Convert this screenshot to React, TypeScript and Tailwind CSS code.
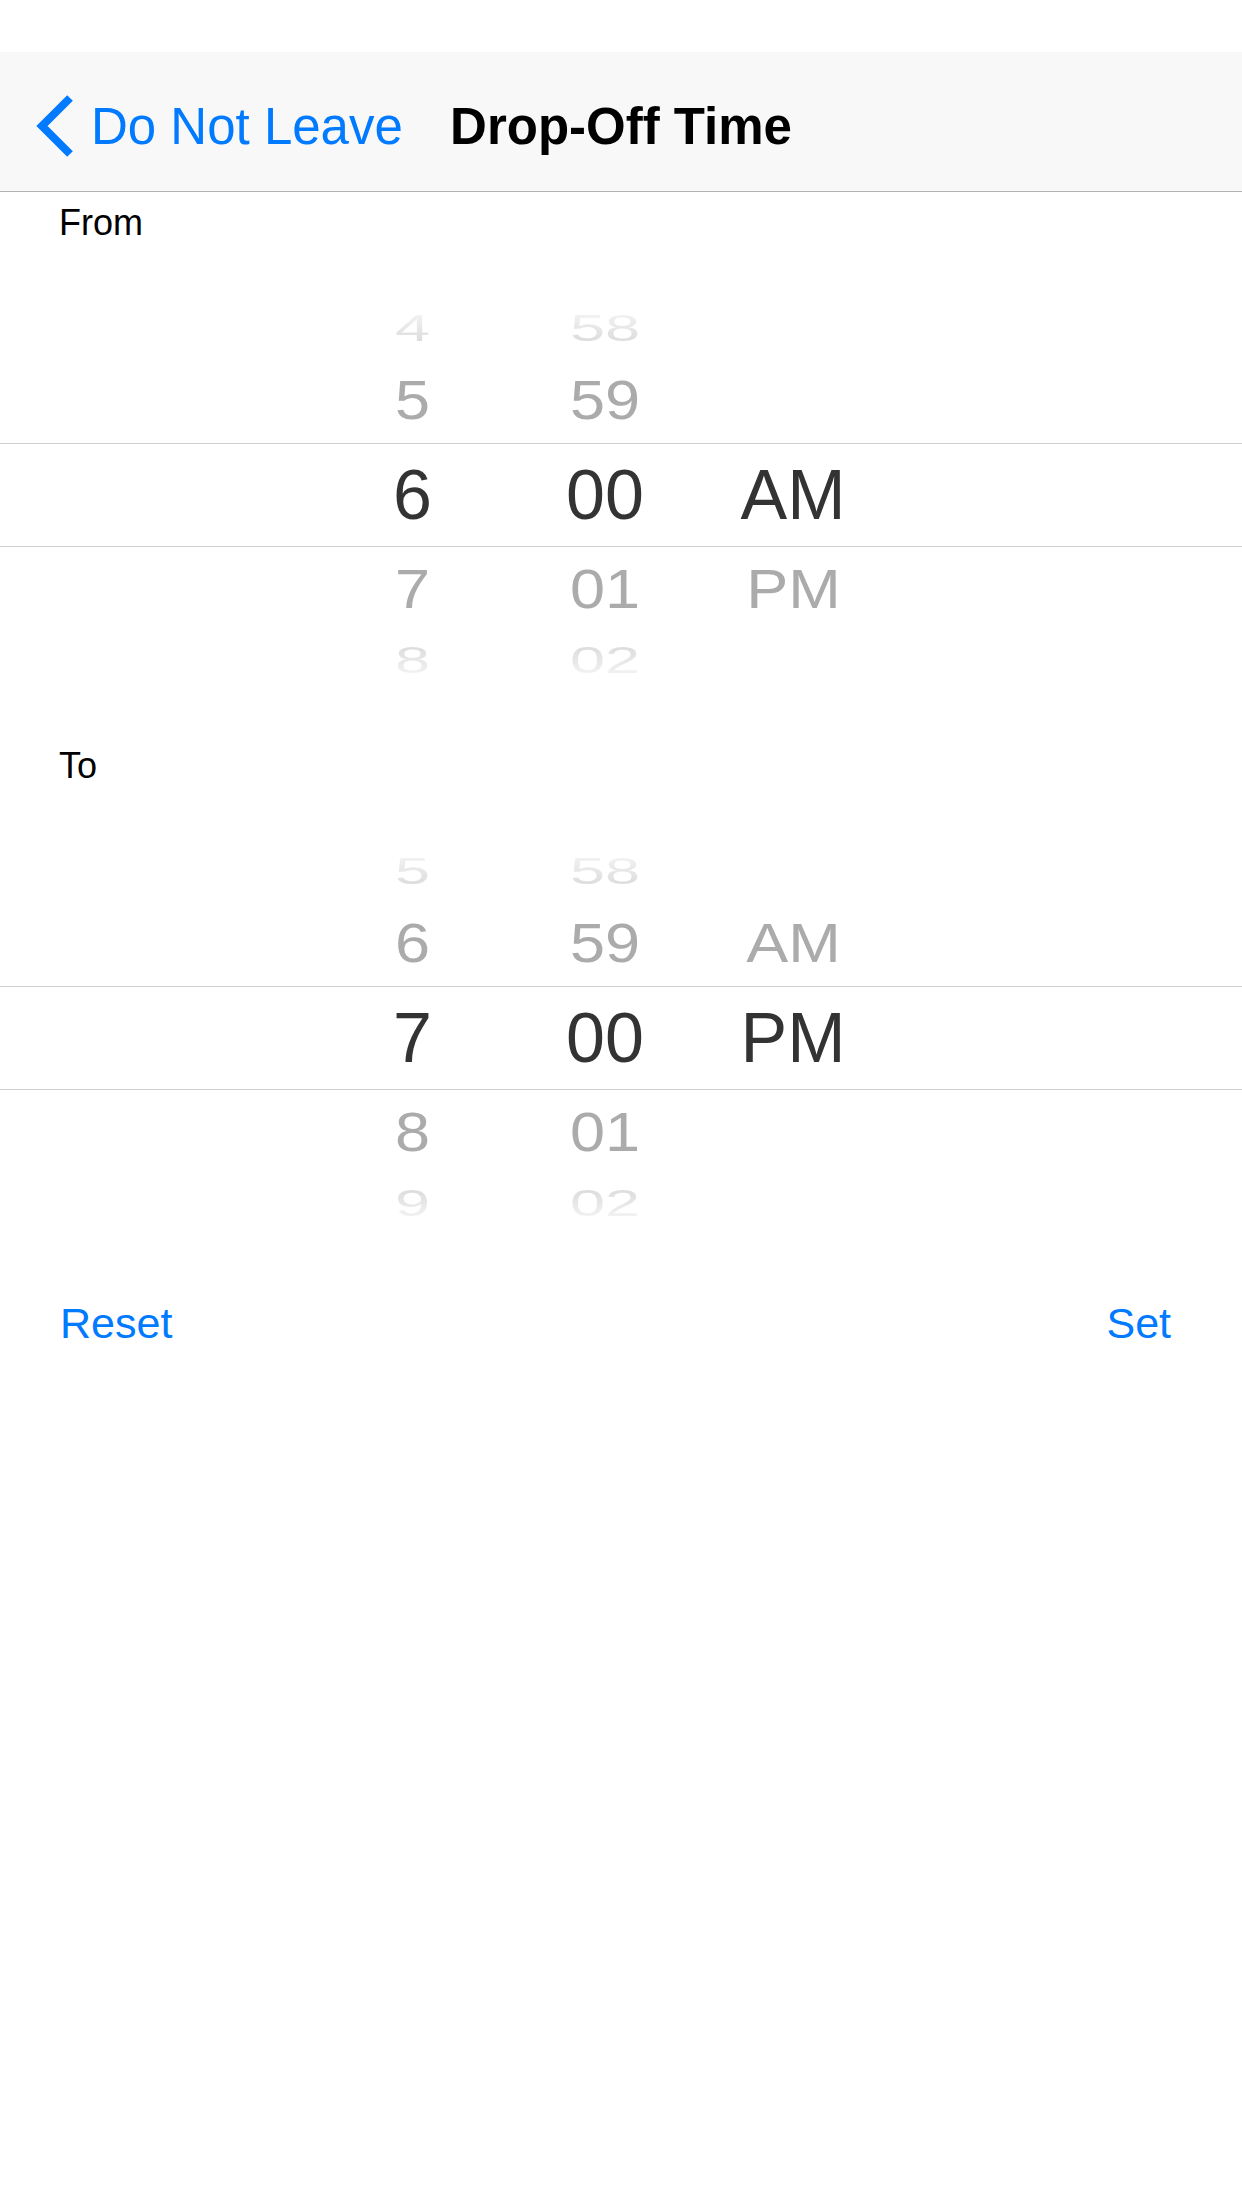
const FONT = "font-['Liberation_Sans',Arial,sans-serif]";

// per-row look of the wheel: height of the slot and how the label is squashed/faded
const ROW_STYLES = [
  {
    h: "h-[58px]",
    text: "scale-x-90 scale-y-[0.54] bg-linear-to-b from-[#f6f6f6] to-[#d8d8d8] bg-clip-text text-transparent",
  },
  { h: "h-[86px]", text: "scale-x-90 scale-y-80 text-[#ababab]" },
  { h: "h-[104px] border-y border-[#d0d0d0]", text: "text-[#333333]" },
  { h: "h-[84px]", text: "scale-x-90 scale-y-80 text-[#ababab]" },
  {
    h: "h-[58px]",
    text: "scale-x-90 scale-y-[0.54] bg-linear-to-b from-[#d8d8d8] to-[#f6f6f6] bg-clip-text text-transparent",
  },
];

function Wheel({ hours, minutes, periods }: { hours: string[]; minutes: string[]; periods: string[] }) {
  return (
    <div className="flex flex-col">
      {ROW_STYLES.map((row, i) => (
        <div key={i} className={`flex items-center pl-[316px] ${row.h}`}>
          {[
            { v: hours[i], w: "w-[193px]" },
            { v: minutes[i], w: "w-[192px]" },
            { v: periods[i], w: "w-[184px]" },
          ].map((c, j) => (
            <div key={j} className={`${c.w} flex justify-center`}>
              {c.v ? (
                <span className={`inline-block text-[70px] leading-none ${row.text}`}>{c.v}</span>
              ) : null}
            </div>
          ))}
        </div>
      ))}
    </div>
  );
}

function Section({
  label,
  hours,
  periods,
  first,
}: {
  label: string;
  hours: string[];
  periods: string[];
  first?: boolean;
}) {
  return (
    <section className={first ? "mt-[13px]" : "mt-[59px]"}>
      <div className="pl-[59px] text-[36px] leading-[36px] text-black">{label}</div>
      <div className="mt-[58px]">
        <Wheel hours={hours} minutes={["58", "59", "00", "01", "02"]} periods={periods} />
      </div>
    </section>
  );
}

export default function App() {
  return (
    <div className={`${FONT} min-h-[2208px] w-[1242px] bg-white`}>
      <div className="h-[52px]" />
      <header className="h-[140px] border-b border-[#b2b2b2] bg-[#f8f8f8]">
        <div className="grid h-full grid-cols-[1fr_auto_1fr] items-center pt-[9px]">
          <div className="flex items-center pl-[36px] text-[#007aff]">
            <svg width="40" height="64" viewBox="0 0 40 64" fill="none">
              <path d="M34 4 L6 32 L34 60" stroke="currentColor" strokeWidth="8" />
            </svg>
            <span className="ml-[15px] text-[51px] leading-[51px]">Do Not Leave</span>
          </div>
          <h1 className="text-[51px] font-semibold leading-[51px] text-black">Drop-Off Time</h1>
          <div />
        </div>
      </header>

      <Section first label="From" hours={["4", "5", "6", "7", "8"]} periods={["", "", "AM", "PM", ""]} />
      <Section label="To" hours={["5", "6", "7", "8", "9"]} periods={["", "AM", "PM", "", ""]} />

      <div className="mt-[70px] flex justify-between pl-[60px] pr-[71px] text-[43px] leading-[43px] text-[#007aff]">
        <button type="button">Reset</button>
        <button type="button">Set</button>
      </div>
    </div>
  );
}
